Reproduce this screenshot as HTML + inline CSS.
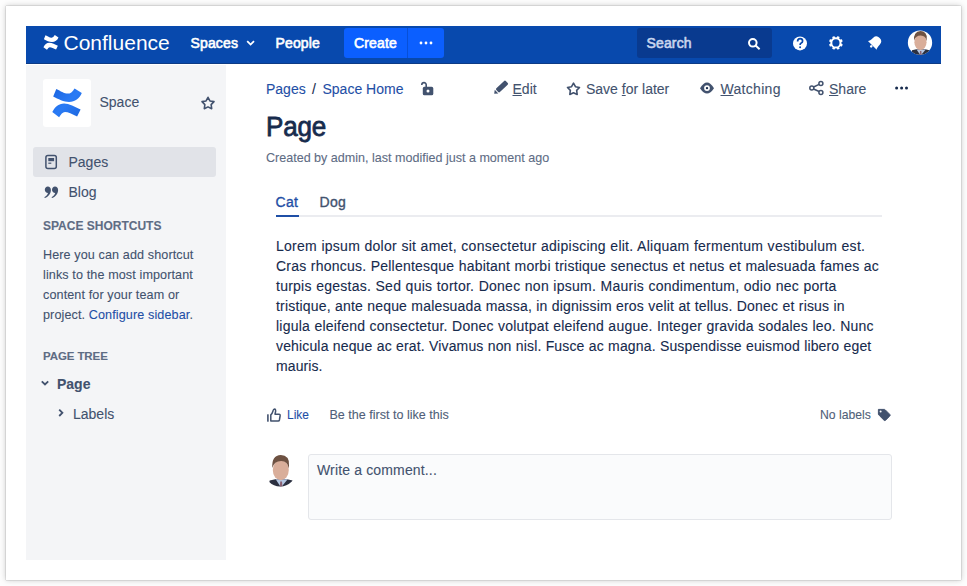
<!DOCTYPE html>
<html><head><meta charset="utf-8">
<style>
*{box-sizing:border-box;margin:0;padding:0}
html,body{width:967px;height:586px;overflow:hidden;background:#fdfdfd;font-family:"Liberation Sans",sans-serif}
#win{position:absolute;left:6px;top:6px;width:955px;height:574px;background:#fff;box-shadow:0 0 1px 0 rgba(0,0,0,.45),0 0 6px 0 rgba(0,0,0,.22)}
.a{position:absolute}
.t{position:absolute;white-space:nowrap;line-height:20px;font-size:14px;-webkit-text-stroke:0.1px currentColor}
#hdr{left:26px;top:26px;width:915px;height:38px;background:#0849ad;border-bottom:1px solid #0d3b85}
#side{left:26px;top:65px;width:200px;height:495px;background:#f4f5f7}
.hw{color:#fff;font-weight:normal;letter-spacing:0.15px;-webkit-text-stroke:0.6px currentColor}
.nav{color:#42526e}
.link{color:#1f4fa6}
.dark{color:#172b4d}
.meta{color:#5e6c84}
.act{color:#42526e}
.body{color:#172b4d;letter-spacing:0.2px}
.j{text-align:justify;text-align-last:justify}
</style></head>
<body>
<div id="win"></div>
<div id="hdr" class="a"></div>
<div id="side" class="a"></div>

<!-- header -->
<div class="t" style="left:63.5px;top:33px;font-size:21px;color:#fff;-webkit-text-stroke:0">Confluence</div>
<div class="t hw" style="left:190.5px;top:33px">Spaces</div>
<div class="t hw" style="left:275.5px;top:33px">People</div>
<div class="a" style="left:344px;top:28px;width:100px;height:30px;background:#0b5fff;border-radius:3px"></div>
<div class="a" style="left:407px;top:28px;width:1px;height:30px;background:#0750d8"></div>
<div class="t hw" style="left:354px;top:33px">Create</div>
<div class="a" style="left:637px;top:28px;width:135px;height:30px;background:#093a8f;border-radius:3px"></div>
<div class="t hw" style="left:646.5px;top:33px;color:#c9d6ee">Search</div>

<!-- sidebar -->
<div class="a" style="left:43px;top:79px;width:48px;height:48px;background:#fff;border-radius:3px"></div>
<div class="t nav" style="left:99.5px;top:92px">Space</div>
<div class="a" style="left:33px;top:147px;width:183px;height:30px;background:#e1e3e8;border-radius:3px"></div>
<div class="t nav" style="left:68.5px;top:152px">Pages</div>
<div class="t nav" style="left:68.5px;top:182px">Blog</div>
<div class="t" style="left:43px;top:216px;font-size:12px;font-weight:bold;color:#5e6c84">SPACE SHORTCUTS</div>
<div class="t" style="left:43px;top:245px;font-size:12.6px;color:#42526e;letter-spacing:0.11px">Here you can add shortcut</div>
<div class="t" style="left:43px;top:265px;font-size:12.6px;color:#42526e;letter-spacing:0.11px">links to the most important</div>
<div class="t" style="left:43px;top:285px;font-size:12.6px;color:#42526e;letter-spacing:0.11px">content for your team or</div>
<div class="t" style="left:43px;top:305px;font-size:12.6px;color:#42526e;letter-spacing:0.11px">project. <span class="link">Configure sidebar</span>.</div>
<div class="t" style="left:43px;top:346px;font-size:11.5px;font-weight:bold;color:#5e6c84;letter-spacing:-0.1px">PAGE TREE</div>
<div class="t" style="left:57px;top:374px;font-weight:bold;color:#42526e">Page</div>
<div class="t nav" style="left:73px;top:404px">Labels</div>

<!-- main -->
<div class="t link" style="left:266px;top:79px">Pages</div>
<div class="t dark" style="left:312px;top:79px">/</div>
<div class="t link" style="left:322.5px;top:79px">Space Home</div>
<div class="t act" style="left:512.5px;top:79px"><u>E</u>dit</div>
<div class="t act" style="left:586px;top:79px">Save <u>f</u>or later</div>
<div class="t act" style="left:720.5px;top:79px;letter-spacing:0.3px"><u>W</u>atching</div>
<div class="t act" style="left:829px;top:79px"><u>S</u>hare</div>

<div class="t dark" style="left:266px;top:117px;font-size:28px;font-weight:normal;letter-spacing:-0.2px;-webkit-text-stroke:0.8px currentColor;transform:scaleX(0.93);transform-origin:0 0">Page</div>
<div class="t meta" style="left:266px;top:148px;font-size:12.55px">Created by admin, last modified just a moment ago</div>

<div class="t link" style="left:275.5px;top:192px;letter-spacing:0.35px;-webkit-text-stroke:0.35px currentColor">Cat</div>
<div class="t dark" style="left:319.5px;top:192px;letter-spacing:0.35px;-webkit-text-stroke:0.35px currentColor;color:#42526e">Dog</div>
<div class="a" style="left:276px;top:215px;width:606px;height:2px;background:#ebecf0"></div>
<div class="a" style="left:276px;top:215px;width:23px;height:2px;background:#1f4fa6"></div>

<div class="t body j" style="left:276px;top:236px;width:589.2px;letter-spacing:0.26px">Lorem ipsum dolor sit amet, consectetur adipiscing elit. Aliquam fermentum vestibulum est.</div>
<div class="t body j" style="left:276px;top:256px;width:603.1px;letter-spacing:0.22px">Cras rhoncus. Pellentesque habitant morbi tristique senectus et netus et malesuada fames ac</div>
<div class="t body j" style="left:276px;top:276px;width:560.6px;letter-spacing:0.25px">turpis egestas. Sed quis tortor. Donec non ipsum. Mauris condimentum, odio nec porta</div>
<div class="t body j" style="left:276px;top:296px;width:568.8px;letter-spacing:0.18px">tristique, ante neque malesuada massa, in dignissim eros velit at tellus. Donec et risus in</div>
<div class="t body j" style="left:276px;top:316px;width:597.8px;letter-spacing:0.22px">ligula eleifend consectetur. Donec volutpat eleifend augue. Integer gravida sodales leo. Nunc</div>
<div class="t body j" style="left:276px;top:336px;width:595.4px;letter-spacing:0.15px">vehicula neque ac erat. Vivamus non nisl. Fusce ac magna. Suspendisse euismod libero eget</div>
<div class="t body" style="left:276px;top:356px;letter-spacing:0.1px">mauris.</div>

<div class="t link" style="left:287px;top:405px;font-size:12px">Like</div>
<div class="t meta" style="left:329.5px;top:405px;font-size:12.55px;color:#505f79">Be the first to like this</div>
<div class="t meta" style="left:820px;top:405px;font-size:12.2px;color:#505f79">No labels</div>

<div class="a" style="left:308px;top:454px;width:584px;height:66px;background:#fafbfc;border:1px solid #e4e6ea;border-radius:3px"></div>
<div class="t" style="left:317px;top:460px;color:#42526e;letter-spacing:0.15px">Write a comment...</div>
<svg class="a" style="left:0;top:0" width="967" height="586" viewBox="0 0 967 586">
<defs><linearGradient id="cg" gradientUnits="userSpaceOnUse" x1="53" y1="88" x2="82" y2="117"><stop offset="0" stop-color="#1a64e0"/><stop offset="0.5" stop-color="#2a7bf5"/><stop offset="1" stop-color="#1d66dd"/></linearGradient></defs>
<!-- header logo -->
<g fill="#fff" transform="translate(43.9,35.1) scale(0.51) translate(-53.2,-88.4)">
<path d="M56.3,88.9 C61,91 64,93.8 68.5,93.6 C71.5,93.4 73,90.5 74.6,88.4 L81.8,93 C79.5,98.5 75,102 69,102 C64,102 58,99 53.2,96.5 Z"/>
<path d="M52.3,112.1 C54.5,107.5 58.5,103.5 64.1,103.5 C69,103.5 75,107 80.6,109.5 L77.1,116.5 C72,114 68,112 65,112 C62.5,112 61,114.5 59.1,117.2 Z"/>
</g>
<!-- spaces chevron -->
<path d="M247.2,41.2 L250.6,44.6 L254,41.2" fill="none" stroke="#fff" stroke-width="1.8"/>
<!-- create dots -->
<g fill="#fff"><circle cx="421" cy="43" r="1.4"/><circle cx="426" cy="43" r="1.4"/><circle cx="431" cy="43" r="1.4"/></g>
<!-- search icon -->
<g fill="none" stroke="#fff" stroke-width="2"><circle cx="752.8" cy="42.8" r="3.8"/><path d="M755.6,45.6 L759.6,49.3"/></g>
<!-- help -->
<circle cx="800" cy="43.4" r="7" fill="#fff"/>
<path d="M797.6,41.4 Q797.6,38.6 800.1,38.6 Q802.6,38.6 802.6,41 Q802.6,42.4 801.2,43.1 Q800.1,43.6 800.1,45" fill="none" stroke="#0849ad" stroke-width="1.7"/>
<circle cx="800.1" cy="47.2" r="1" fill="#0849ad"/>
<!-- gear -->
<g transform="translate(835.9,42.9)">
<g fill="#fff">
<rect x="-1.3" y="-6.9" width="2.6" height="13.8" rx="0.6" transform="rotate(22.5)"/><rect x="-1.3" y="-6.9" width="2.6" height="13.8" rx="0.6" transform="rotate(67.5)"/><rect x="-1.3" y="-6.9" width="2.6" height="13.8" rx="0.6" transform="rotate(112.5)"/><rect x="-1.3" y="-6.9" width="2.6" height="13.8" rx="0.6" transform="rotate(157.5)"/>
<circle r="5.6"/>
</g>
<circle r="3.6" fill="#0849ad"/>
</g>
<!-- bell -->
<g transform="translate(872.3,45.3) rotate(45)" fill="#fff">
<path d="M-6.2,0 L6.2,0 Q4.9,-1 4.7,-6 Q4.5,-10.4 0,-10.4 Q-4.5,-10.4 -4.7,-6 Q-4.9,-1 -6.2,0 Z"/>
<circle cx="0" cy="1.5" r="1.3"/>
</g>
<!-- avatar -->
<clipPath id="av"><circle cx="0" cy="0" r="16"/></clipPath>
<g transform="translate(920,42.7) scale(0.76)"><g clip-path="url(#av)">
<rect x="-17" y="-17" width="34" height="34" fill="#ffffff"/>
<path d="M-12,17 L-10.5,10 Q-5,8.3 1,8.3 Q7,8.3 12.5,10 L14,17 Z" fill="#2b3040"/>
<path d="M-4.5,8.8 L0.8,17 L7.5,8.8 Z" fill="#b4c6e2"/>
<path d="M0,11 L1.8,11 L2.2,17 L-0.4,17 Z" fill="#8a6070"/>
<ellipse cx="0.6" cy="-0.5" rx="8" ry="10.2" fill="#d9ae9a"/>
<path d="M-7.9,-2.5 Q-8.8,-14.8 0.6,-15.4 Q9.6,-15 8.8,-5 L8.5,-2 Q7.8,-9.3 1,-9.6 Q-6.2,-9.5 -7.9,-2.5 Z" fill="#6e5242"/>
</g></g>

<!-- space logo -->
<g fill="url(#cg)">
<path d="M56.3,88.9 C61,91 64,93.8 68.5,93.6 C71.5,93.4 73,90.5 74.6,88.4 L81.8,93 C79.5,98.5 75,102 69,102 C64,102 58,99 53.2,96.5 Z"/>
<path d="M52.3,112.1 C54.5,107.5 58.5,103.5 64.1,103.5 C69,103.5 75,107 80.6,109.5 L77.1,116.5 C72,114 68,112 65,112 C62.5,112 61,114.5 59.1,117.2 Z"/>
</g>
<!-- sidebar star -->
<path d="M208.00,97.30 L209.94,100.93 L213.99,101.65 L211.14,104.62 L211.70,108.70 L208.00,106.90 L204.30,108.70 L204.86,104.62 L202.01,101.65 L206.06,100.93 Z" fill="none" stroke="#42526e" stroke-width="1.6" stroke-linejoin="round"/>
<!-- page icon -->
<rect x="45.9" y="155.6" width="10.4" height="12.8" rx="2" fill="none" stroke="#42526e" stroke-width="1.5"/>
<rect x="48.3" y="158" width="5.8" height="3.2" fill="#42526e"/>
<rect x="48.3" y="162.6" width="3" height="1.2" fill="#42526e"/>
<!-- quote icon -->
<g fill="#42526e">
<path transform="translate(44,186.2)" d="M3.8,0.4 C5.6,0.4 6.9,1.8 6.9,3.7 C6.9,7.2 4.6,10.4 0.9,11.9 L0.3,11 C2.5,9.6 3.7,8.1 4,6.7 C2.2,6.7 0.8,5.3 0.8,3.5 C0.8,1.8 2.1,0.4 3.8,0.4 Z"/>
<path transform="translate(51.2,186.2)" d="M3.8,0.4 C5.6,0.4 6.9,1.8 6.9,3.7 C6.9,7.2 4.6,10.4 0.9,11.9 L0.3,11 C2.5,9.6 3.7,8.1 4,6.7 C2.2,6.7 0.8,5.3 0.8,3.5 C0.8,1.8 2.1,0.4 3.8,0.4 Z"/>
</g>
<!-- tree chevrons -->
<path d="M41.8,381.3 L45,384.5 L48.2,381.3" fill="none" stroke="#42526e" stroke-width="1.8"/>
<path d="M59.2,409.6 L62.4,412.8 L59.2,416" fill="none" stroke="#42526e" stroke-width="1.8"/>

<!-- lock -->
<path d="M421.8,85 L421.8,84.8 A2.2,2.2 0 0 1 426.2,84.8 L426.2,87.5" fill="none" stroke="#42526e" stroke-width="1.6"/>
<rect x="422.8" y="86.8" width="10.5" height="8.5" rx="1.6" fill="#42526e"/>
<circle cx="428" cy="91.1" r="1.5" fill="#fff"/>
<!-- pencil -->
<g transform="translate(494.2,93.8) rotate(-43)" fill="#42526e">
<rect x="4.2" y="-2.6" width="13" height="5.2" rx="1.2"/>
<path d="M0,0 L3.2,-2.6 L3.2,2.6 Z"/>
</g>
<!-- star -->
<path d="M573.50,83.10 L575.44,86.73 L579.49,87.45 L576.64,90.42 L577.20,94.50 L573.50,92.70 L569.80,94.50 L570.36,90.42 L567.51,87.45 L571.56,86.73 Z" fill="none" stroke="#42526e" stroke-width="1.6" stroke-linejoin="round"/>
<!-- eye -->
<path d="M700,88.2 Q703.5,82.6 707,82.6 Q710.5,82.6 714,88.2 Q710.5,93.6 707,93.6 Q703.5,93.6 700,88.2 Z" fill="#42526e"/>
<circle cx="707" cy="88.1" r="2.9" fill="#fff"/>
<circle cx="707" cy="88.1" r="1.2" fill="#172b4d"/>
<!-- share -->
<g fill="none" stroke="#42526e" stroke-width="1.5">
<circle cx="811.8" cy="88" r="2"/><circle cx="820.9" cy="83.5" r="2"/><circle cx="820.9" cy="92.4" r="2"/>
<path d="M813.6,87 L819.1,84.4 M813.6,89 L819.1,91.5"/>
</g>
<!-- more dots -->
<g fill="#172b4d"><circle cx="896.6" cy="88" r="1.5"/><circle cx="901.6" cy="88" r="1.5"/><circle cx="906.5" cy="88" r="1.5"/></g>
<!-- thumb -->
<rect x="267.1" y="414.3" width="1.6" height="7.4" fill="#42526e"/>
<path d="M270.8,421 L270.8,414.8 Q272.3,413.6 273,411 Q273.3,409 274.6,409 Q275.8,409.2 275.6,411.5 L275,414.2 L279,414.2 Q280.4,414.3 280.1,416 L279.4,420 Q279.2,421 278.2,421 Z" fill="none" stroke="#42526e" stroke-width="1.5" stroke-linejoin="round"/>
<!-- tag -->
<path d="M878.4,409.4 L884.2,409.4 Q884.8,409.4 885.3,409.9 L889.8,414.4 Q890.6,415.2 889.8,416 L885.6,420.2 Q884.8,421 884,420.2 L879.4,415.6 Q878.4,414.8 878.4,414 Z" fill="#42526e" stroke="#42526e" stroke-width="1" stroke-linejoin="round"/>
<circle cx="880.6" cy="411.6" r="1" fill="#fff"/>
<!-- comment avatar -->
<clipPath id="av2"><circle cx="0" cy="0" r="16"/></clipPath>
<g transform="translate(280.2,470.5) scale(1.0)"><g clip-path="url(#av2)">
<rect x="-17" y="-17" width="34" height="34" fill="#ffffff"/>
<path d="M-12,17 L-10.5,10 Q-5,8.3 1,8.3 Q7,8.3 12.5,10 L14,17 Z" fill="#2b3040"/>
<path d="M-4.5,8.8 L0.8,17 L7.5,8.8 Z" fill="#b4c6e2"/>
<path d="M0,11 L1.8,11 L2.2,17 L-0.4,17 Z" fill="#8a6070"/>
<ellipse cx="0.6" cy="-0.5" rx="8" ry="10.2" fill="#d9ae9a"/>
<path d="M-7.9,-2.5 Q-8.8,-14.8 0.6,-15.4 Q9.6,-15 8.8,-5 L8.5,-2 Q7.8,-9.3 1,-9.6 Q-6.2,-9.5 -7.9,-2.5 Z" fill="#6e5242"/>
</g></g>
</svg>
</body></html>
